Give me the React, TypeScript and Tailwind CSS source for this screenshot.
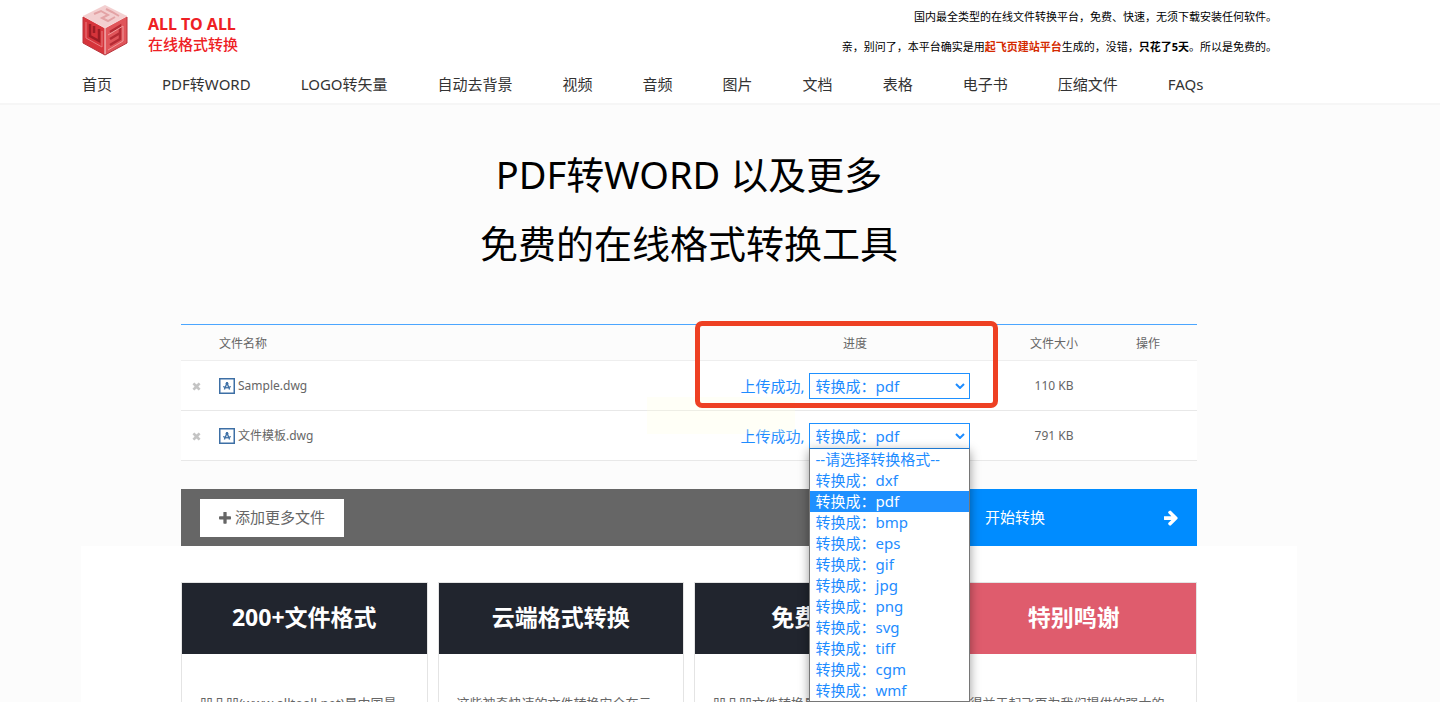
import { useState } from 'react'

const navItems = [
  '首页',
  'PDF转WORD',
  'LOGO转矢量',
  '自动去背景',
  '视频',
  '音频',
  '图片',
  '文档',
  '表格',
  '电子书',
  '压缩文件',
  'FAQs',
]

const formats = ['dxf', 'pdf', 'bmp', 'eps', 'gif', 'jpg', 'png', 'svg', 'tiff', 'cgm', 'wmf']

const files = [
  { name: 'Sample.dwg', size: '110 KB' },
  { name: '文件模板.dwg', size: '791 KB' },
]

const cards = [
  { title: '200+文件格式', text: '凹凸凹(www.alltoall.net)是中国最全的在线文件转换平台', color: 'bg-[#21252e]' },
  { title: '云端格式转换', text: '这些神奇快速的文件转换安全在云端完成，不占用您的电脑', color: 'bg-[#21252e]' },
  { title: '免费使用', text: '凹凸凹文件转换是一个完全免费的服务，无须注册', color: 'bg-[#21252e]' },
  { title: '特别鸣谢', text: '得益于起飞页为我们提供的强大的建站平台', color: 'bg-[#df5c6d]' },
]

function Logo() {
  return (
    <svg viewBox="0 0 48 52" className="h-[52px] w-12" aria-hidden="true">
      <path d="M24 1L46 12L24 24L2 12Z" fill="#f3cfd0" />
      <path d="M2 12L24 24V51L2 39Z" fill="#d6343b" />
      <path d="M46 12L24 24V51L46 39Z" fill="#e0555a" />
      <path d="M13 10L20 7L27 11L21 14L27 17L34 13M25 5L31 8L38 12" fill="none" stroke="#e3a3a5" strokeWidth="2" />
      <path d="M9 20V32L18 37V25M13 22V29" fill="none" stroke="#9d1c25" strokeWidth="2.5" />
      <path d="M5 18V34L21 43V27" fill="none" stroke="#ea7c80" strokeWidth="1" />
      <path d="M29 28L39 22V35L29 41M29 35L39 29" fill="none" stroke="#b52b34" strokeWidth="2.5" />
      <path d="M27 31L42 22M42 22V37L27 46" fill="none" stroke="#f09a9b" strokeWidth="1" />
      <path d="M2 12L24 24L46 12M24 24V51" fill="none" stroke="#f8dada" strokeWidth="1" />
      <path d="M2 13V39L24 51L46 39V13" fill="none" stroke="#b8343c" strokeWidth="1" />
    </svg>
  )
}

function PlusIcon() {
  return (
    <svg viewBox="190 150 1410 1410" className="h-3 w-3 fill-current" aria-hidden="true">
      <path d="M1600 736v192q0 40-28 68t-68 28h-416v416q0 40-28 68t-68 28h-192q-40 0-68-28t-28-68v-416h-416q-40 0-68-28t-28-68v-192q0-40 28-68t68-28h416v-416q0-40 28-68t68-28h192q40 0 68 28t28 68v416h416q40 0 68 28t28 68z" />
    </svg>
  )
}

function RemoveIcon() {
  return (
    <svg viewBox="0 0 10 10" className="h-[9px] w-[9px] fill-current" aria-hidden="true">
      <path d="M2.6 0.5L5 2.9L7.4 0.5L9.5 2.6L7.1 5L9.5 7.4L7.4 9.5L5 7.1L2.6 9.5L0.5 7.4L2.9 5L0.5 2.6Z" />
    </svg>
  )
}

function ArrowIcon() {
  return (
    <svg viewBox="192 150 1440 1600" className="h-4 w-[14px] fill-current" aria-hidden="true">
      <path d="M1600 960q0 54-37 91l-651 651q-39 37-91 37-51 0-90-37l-75-75q-38-38-38-91t38-91l293-293h-704q-52 0-84.5-37.5t-32.5-90.5v-128q0-53 32.5-90.5t84.5-37.5h704l-293-294q-38-36-38-90t38-90l75-75q38-38 90-38 53 0 91 38l651 651q37 35 37 90z" />
    </svg>
  )
}

function DwgIcon() {
  return (
    <svg viewBox="0 0 16 16" className="h-4 w-4 shrink-0" fill="none" stroke="#3d6fa5" aria-hidden="true">
      <rect x="0.75" y="0.75" width="14.5" height="14.5" strokeWidth="1.5" />
      <path d="M8 4V6M7.6 6L5.4 11.5M8.4 6L10.6 11.5" strokeWidth="1.4" />
      <path d="M4.2 8.6Q8 11 11.8 8.6" strokeWidth="1.2" />
      <circle cx="8" cy="5.5" r="1" fill="#3d6fa5" strokeWidth="1" />
    </svg>
  )
}

function FormatSelect({ label, open }: { label: string; open?: boolean }) {
  const [format, setFormat] = useState('pdf')

  return (
    <div className="relative w-[161px] text-left">
      <select
        aria-label={label}
        value={format}
        onChange={(e) => setFormat(e.target.value)}
        className="block h-[26px] w-full appearance-none border border-[#1e90ff] bg-white pl-[6px] text-[15px] leading-6 text-[#1e8cff] outline-none"
      >
        <option value="">--请选择转换格式--</option>
        {formats.map((f) => (
          <option key={f} value={f}>
            转换成：{f}
          </option>
        ))}
      </select>
      <svg
        viewBox="0 0 10 6"
        className="pointer-events-none absolute top-[10px] right-[5px] h-[6px] w-[10px]"
        fill="none"
        stroke="#1e8cff"
        strokeWidth="2"
        aria-hidden="true"
      >
        <path d="M1 1L5 5L9 1" />
      </svg>
      {open && (
        <ul
          role="listbox"
          aria-label={label}
          className="absolute top-[25px] left-0 z-10 w-full border border-t-[#1e78d0] border-[#767676] bg-white text-[15px] leading-[21px] text-[#1e8cff] shadow-[0_3px_10px_rgba(0,0,0,0.4)]"
        >
          <li role="option" aria-selected={false} className="pl-[6px]">
            --请选择转换格式--
          </li>
          {formats.map((f) => (
            <li
              key={f}
              role="option"
              aria-selected={f === format}
              onClick={() => setFormat(f)}
              className={f === format ? 'bg-[#1e90ff] pl-[6px] text-white' : 'pl-[6px]'}
            >
              转换成：{f}
            </li>
          ))}
        </ul>
      )}
    </div>
  )
}

export default function App() {
  return (
    <div className="h-screen overflow-hidden bg-[#fcfcfc] font-['Noto_Sans','Noto_Sans_CJK_SC',sans-serif] text-[#666]">
      <header className="border-b-2 border-[#f6f6f6] bg-white pr-[143px] pl-[81px]">
        <div className="flex h-[66px] justify-between">
          <a href="#" className="flex items-start gap-[19px] pt-1 text-[#ee2024]">
            <Logo />
            <span className="block pt-[10px] text-[15px] leading-5">
              <b className="block text-base leading-5">ALL TO ALL</b>
              <span className="block font-medium">在线格式转换</span>
            </span>
          </a>
          <div className="pt-[2px] pr-5 text-right text-[11px] leading-[30px] text-black">
            <p>国内最全类型的在线文件转换平台，免费、快速，无须下载安装任何软件。</p>
            <p>
              亲，别问了，本平台确实是用
              <a href="#" className="font-bold text-[#d42a00]">
                起飞页建站平台
              </a>
              生成的，没错，<b>只花了5天</b>。所以是免费的。
            </p>
          </div>
        </div>
        <nav className="flex h-[37px] items-center gap-[50px] pl-px text-[15px] whitespace-nowrap text-[#333]">
          {navItems.map((item) => (
            <a key={item} href="#">
              {item}
            </a>
          ))}
        </nav>
      </header>

      <main className="pr-[143px] pl-[81px]">
        <section className="px-[100px] pt-[35px]">
          <h1 className="text-center text-[38px] leading-[69px] text-black">
            PDF转WORD 以及更多
            <br />
            免费的在线格式转换工具
          </h1>

          <div className="relative mt-[46px]">
            <table className="w-full table-fixed border-separate border-spacing-0 text-[12px]">
              <colgroup>
                <col className="w-[38px]" />
                <col />
                <col className="w-[308px]" />
                <col className="w-[90px]" />
                <col className="w-[98px]" />
              </colgroup>
              <thead>
                <tr className="h-[37px] *:border-t *:border-b *:border-t-[#4ba6ff] *:border-b-[#eee] *:pt-[2px] *:font-normal">
                  <th></th>
                  <th className="text-left">文件名称</th>
                  <th>进度</th>
                  <th>文件大小</th>
                  <th>操作</th>
                </tr>
              </thead>
              <tbody>
                {files.map((file, i) => (
                  <tr key={file.name} className="h-[50px] bg-white *:border-b *:border-[#e8e8e8] *:pt-px">
                    <td>
                      <button aria-label="删除" className="block pl-[11px] text-[#c4c4c4]">
                        <RemoveIcon />
                      </button>
                    </td>
                    <td>
                      <div className="flex items-center gap-[3px]">
                        <DwgIcon />
                        {file.name}
                      </div>
                    </td>
                    <td>
                      <div className="flex items-center justify-center gap-1 text-[15px] text-[#1e8cff]">
                        <span>上传成功,</span>
                        <FormatSelect label={file.name} open={i === 1} />
                      </div>
                    </td>
                    <td className="text-center">{file.size}</td>
                    <td></td>
                  </tr>
                ))}
              </tbody>
            </table>
            {/* faint visitor id stamp */}
            <div className="pointer-events-none absolute top-[73px] right-[402px] h-[37px] w-[148px] bg-[#ffffe0]/25 pl-3 font-['Liberation_Serif',serif] text-[21px] leading-9 text-black/2">
              1759991041
            </div>
            <div className="pointer-events-none absolute -top-[3px] right-[199px] h-[87px] w-[303px] rounded-[7px] border-[5px] border-[#ee4023]" />
          </div>

          <div className="mt-7 flex h-[57px] items-center justify-between bg-[#666]">
            <button className="ml-[19px] flex h-[38px] items-center gap-1 bg-white px-[19px] text-[15px]">
              <PlusIcon />
              添加更多文件
            </button>
            <button className="flex h-full w-[231px] items-center justify-between bg-[#008cff] px-[19px] text-[15px] text-white">
              开始转换
              <ArrowIcon />
            </button>
          </div>
        </section>

        <section className="bg-white px-[100px] pt-9">
          <div className="grid grid-cols-4 gap-[10px]">
            {cards.map((card) => (
              <article key={card.title} className="border border-[#e4e4e4]">
                <h2 className={`h-[71px] text-center text-[23px] leading-[68px] font-bold text-white ${card.color}`}>
                  {card.title}
                </h2>
                <p className="py-[37px] pr-6 pl-[18px] text-[13px] leading-6">{card.text}</p>
              </article>
            ))}
          </div>
        </section>
      </main>
    </div>
  )
}
